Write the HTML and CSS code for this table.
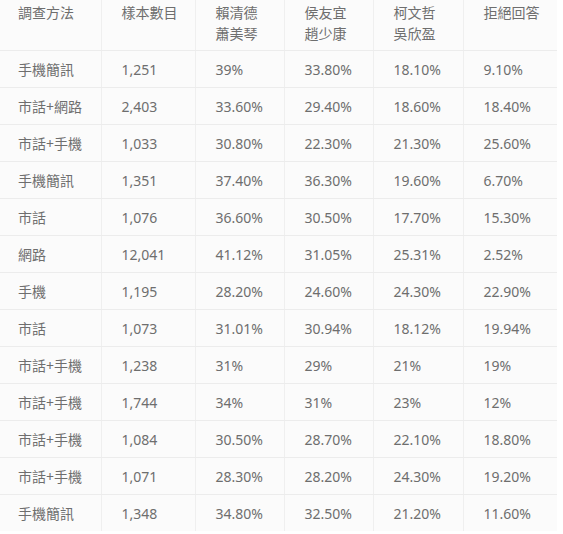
FILE: index.html
```html
<!DOCTYPE html>
<html lang="zh-Hant">
<head>
<meta charset="utf-8">
<link rel="stylesheet" href="styles.css">
</head>
<body>
<table class="poll">
  <colgroup>
    <col class="c1"><col class="c2"><col class="c3"><col class="c4"><col class="c5"><col class="c6">
  </colgroup>
  <thead>
    <tr>
      <th>調查方法</th>
      <th>樣本數目</th>
      <th>賴清德<br>蕭美琴</th>
      <th>侯友宜<br>趙少康</th>
      <th>柯文哲<br>吳欣盈</th>
      <th>拒絕回答</th>
    </tr>
  </thead>
  <tbody>
    <tr><td>手機簡訊</td><td>1,251</td><td>39%</td><td>33.80%</td><td>18.10%</td><td>9.10%</td></tr>
    <tr><td>市話+網路</td><td>2,403</td><td>33.60%</td><td>29.40%</td><td>18.60%</td><td>18.40%</td></tr>
    <tr><td>市話+手機</td><td>1,033</td><td>30.80%</td><td>22.30%</td><td>21.30%</td><td>25.60%</td></tr>
    <tr><td>手機簡訊</td><td>1,351</td><td>37.40%</td><td>36.30%</td><td>19.60%</td><td>6.70%</td></tr>
    <tr><td>市話</td><td>1,076</td><td>36.60%</td><td>30.50%</td><td>17.70%</td><td>15.30%</td></tr>
    <tr><td>網路</td><td>12,041</td><td>41.12%</td><td>31.05%</td><td>25.31%</td><td>2.52%</td></tr>
    <tr><td>手機</td><td>1,195</td><td>28.20%</td><td>24.60%</td><td>24.30%</td><td>22.90%</td></tr>
    <tr><td>市話</td><td>1,073</td><td>31.01%</td><td>30.94%</td><td>18.12%</td><td>19.94%</td></tr>
    <tr><td>市話+手機</td><td>1,238</td><td>31%</td><td>29%</td><td>21%</td><td>19%</td></tr>
    <tr><td>市話+手機</td><td>1,744</td><td>34%</td><td>31%</td><td>23%</td><td>12%</td></tr>
    <tr><td>市話+手機</td><td>1,084</td><td>30.50%</td><td>28.70%</td><td>22.10%</td><td>18.80%</td></tr>
    <tr><td>市話+手機</td><td>1,071</td><td>28.30%</td><td>28.20%</td><td>24.30%</td><td>19.20%</td></tr>
    <tr><td>手機簡訊</td><td>1,348</td><td>34.80%</td><td>32.50%</td><td>21.20%</td><td>11.60%</td></tr>
  </tbody>
</table>
</body>
</html>
```
FILE: styles.css
```css
html, body {
  margin: 0;
  padding: 0;
  background: #ffffff;
}

body {
  font-family: "Noto Sans", "Noto Sans CJK TC", sans-serif;
  font-size: 14px;
  line-height: 21px;
  color: #6e6e6e;
}

.poll {
  width: 557px;
  table-layout: fixed;
  border-collapse: collapse;
  background: #fbfbfb;
}

.c1 { width: 101px; }
.c2 { width: 94px; }
.c3 { width: 89px; }
.c4 { width: 89px; }
.c5 { width: 90px; }
.c6 { width: 94px; }

.poll th,
.poll td {
  text-align: left;
  font-weight: normal;
  border-right: 1px solid #efefef;
  border-bottom: 1px solid #ececec;
  padding-left: 20px;
  padding-right: 4px;
  white-space: nowrap;
}

.poll th:last-child,
.poll td:last-child {
  border-right: none;
}

.poll th:first-child,
.poll td:first-child {
  padding-left: 18px;
}

.poll th {
  vertical-align: top;
  padding-top: 2px;
  padding-bottom: 6px;
}

.poll td {
  vertical-align: middle;
  padding-top: 8px;
  padding-bottom: 7px;
}

.poll tbody tr:last-child td {
  border-bottom: none;
}
```
